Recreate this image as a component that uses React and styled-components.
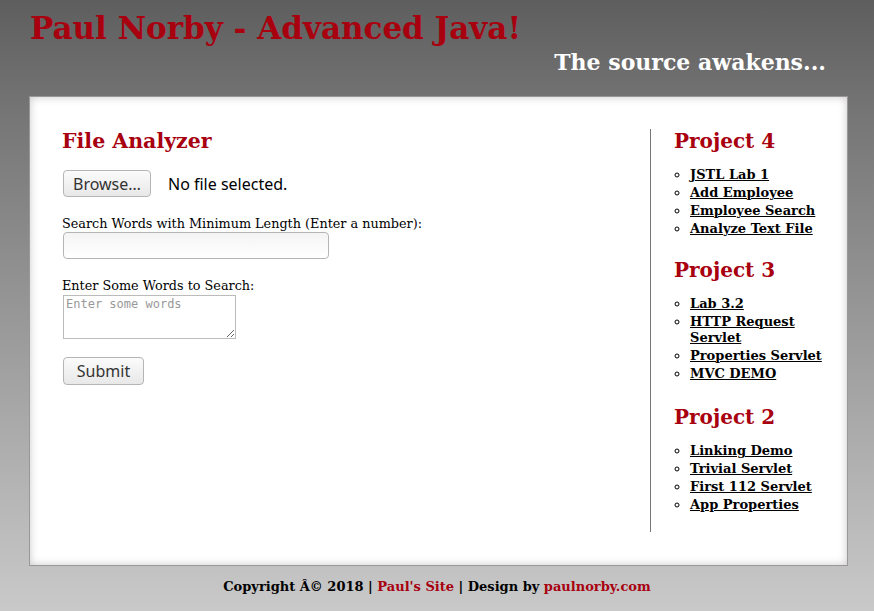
import React from "react";
import styled, { createGlobalStyle } from "styled-components";

const Global = createGlobalStyle`
  html, body { margin: 0; padding: 0; }
  body {
    min-height: 611px;
    background: linear-gradient(to bottom, #5e5e5e 0%, #777 20%, #c9c9c9 100%);
    font-family: "DejaVu Serif", serif;
    color: #000;
  }
`;

const Page = styled.div`
  width: 874px;
  min-height: 611px;
  display: flex;
  flex-direction: column;
`;

const Header = styled.header`
  padding: 10px 48px 0 30px;
  display: flex;
  flex-direction: column;
  height: 87px;
  box-sizing: border-box;
`;

const Title = styled.h1`
  margin: 0;
  font-family: "DejaVu Serif", serif;
  font-weight: bold;
  font-size: 31px;
  line-height: 37px;
  color: #a8000f;
  white-space: nowrap;
`;

const Tagline = styled.div`
  align-self: flex-end;
  font-family: "DejaVu Serif", serif;
  font-weight: bold;
  font-size: 22px;
  line-height: 26px;
  color: #fff;
  margin-top: 2px;
`;

const Box = styled.main`
  margin: 9px 26px 0 29px;
  border: 1px solid #9a969a;
  background: #fff;
  box-shadow: inset 0 0 8px rgba(0, 0, 0, 0.22);
  padding: 32px 0 33px 32px;
  display: flex;
  height: 470px;
  box-sizing: border-box;
`;

const MainCol = styled.section`
  width: 588px;
  border-right: 1px solid #777;
`;

const SideCol = styled.aside`
  padding-left: 23px;
  width: 150px;
`;

const Heading = styled.h2`
  margin: 0;
  font-family: "DejaVu Serif", serif;
  font-weight: bold;
  font-size: 20.5px;
  line-height: 24px;
  color: #a8000f;
`;

const SideHeading = styled(Heading)`
  font-size: 20px;
  margin-top: ${(p) => (p.$first ? "0" : `${p.$gap}px`)};
`;

const FileRow = styled.div`
  margin-top: 17px;
  padding-left: 1px;
  display: flex;
  align-items: center;
  gap: 17px;
  font-family: "Noto Sans", "DejaVu Sans", sans-serif;
  font-size: 16px;
`;

const Button = styled.button`
  font-family: "Noto Sans", "DejaVu Sans", sans-serif;
  font-size: 16px;
  color: #333;
  height: 27px;
  padding: 0 9px;
  border: 1px solid #b5b5b5;
  border-radius: 4px;
  background: linear-gradient(to bottom, #fbfbfb, #e8e8e8);
  box-sizing: border-box;
`;

const Label = styled.label`
  display: block;
  font-size: 12.8px;
  line-height: 16px;
  margin-top: ${(p) => p.$mt || "17px"};
`;

const TextInput = styled.input`
  display: block;
  width: 266px;
  height: 27px;
  box-sizing: border-box;
  border: 1px solid #b5b5b5;
  border-radius: 4px;
  background: linear-gradient(to bottom, #f4f4f4, #fff);
  margin: 0 0 0 1px;
`;

const TextArea = styled.textarea`
  display: block;
  width: 173px;
  height: 44px;
  box-sizing: border-box;
  border: 1px solid #bbb;
  margin: 1px 0 0 1px;
  padding: 1px 2px;
  font-family: "DejaVu Sans Mono", monospace;
  font-size: 12px;
  resize: both;
  &::placeholder { color: #999; }
`;

const SubmitButton = styled(Button)`
  display: block;
  margin: 18px 0 0 1px;
  width: 81px;
  padding: 0;
  height: 28px;
`;

const List = styled.ul`
  margin: 14px 0 0 0;
  padding-left: 16px;
  list-style: circle;
`;

const Item = styled.li`
  font-weight: bold;
  font-size: 13px;
  line-height: 16px;
  margin-bottom: 2px;
`;

const Link = styled.a`
  color: #000;
  text-decoration: underline;
  text-decoration-thickness: 1px;
`;

const Footer = styled.footer`
  text-align: center;
  padding-top: 12px;
  font-family: "DejaVu Serif", serif;
  font-weight: bold;
  font-size: 13px;
  line-height: 18px;
`;

const Red = styled.a`
  color: #a8000f;
  text-decoration: none;
`;

const projects = [
  { name: "Project 4", gap: 0, links: ["JSTL Lab 1", "Add Employee", "Employee Search", "Analyze Text File"] },
  { name: "Project 3", gap: 21, links: ["Lab 3.2", "HTTP Request Servlet", "Properties Servlet", "MVC DEMO"] },
  { name: "Project 2", gap: 23, links: ["Linking Demo", "Trivial Servlet", "First 112 Servlet", "App Properties"] },
];

export default function App() {
  return (
    <Page>
      <Global />
      <Header>
        <Title>Paul Norby - Advanced Java!</Title>
        <Tagline>The source awakens...</Tagline>
      </Header>
      <Box>
        <MainCol>
          <Heading>File Analyzer</Heading>
          <FileRow>
            <Button type="button">Browse…</Button>
            <span>No file selected.</span>
          </FileRow>
          <Label $mt="19px">Search Words with Minimum Length (Enter a number):</Label>
          <TextInput type="text" />
          <Label $mt="19px">Enter Some Words to Search:</Label>
          <TextArea placeholder="Enter some words" />
          <SubmitButton type="button">Submit</SubmitButton>
        </MainCol>
        <SideCol>
          {projects.map((p, i) => (
            <div key={p.name}>
              <SideHeading $first={i === 0} $gap={p.gap}>{p.name}</SideHeading>
              <List>
                {p.links.map((l) => (
                  <Item key={l}>
                    <Link href="#">{l}</Link>
                  </Item>
                ))}
              </List>
            </div>
          ))}
        </SideCol>
      </Box>
      <Footer>
        Copyright Â© 2018 | <Red href="#">Paul's Site</Red> | Design by <Red href="#">paulnorby.com</Red>
      </Footer>
    </Page>
  );
}
